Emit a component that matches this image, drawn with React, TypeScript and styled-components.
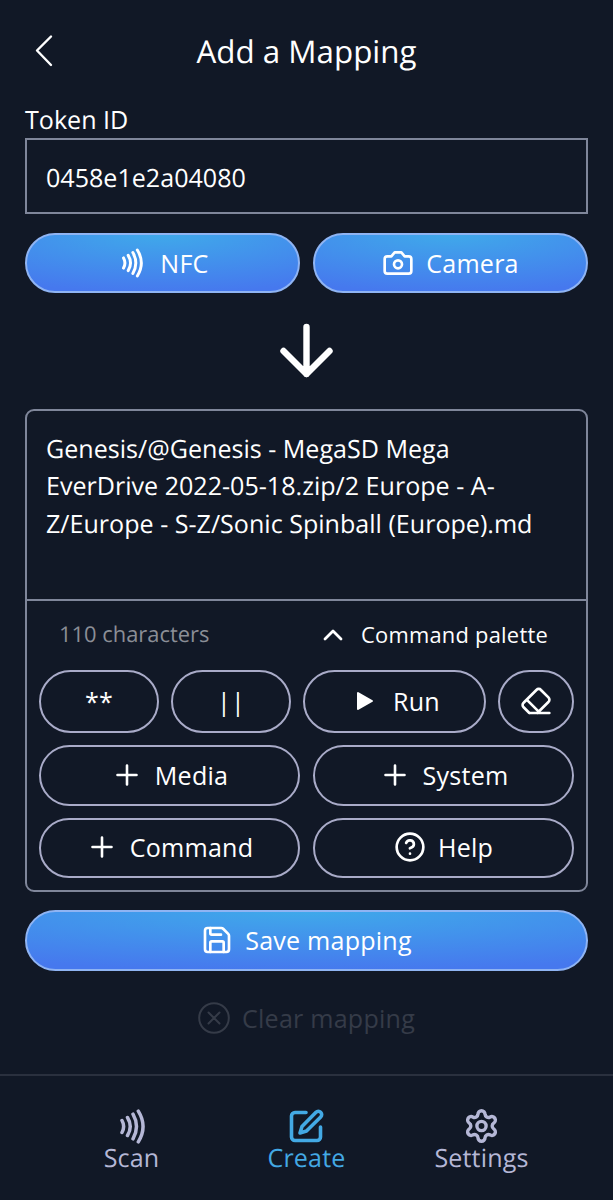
import React from 'react';
import styled, { createGlobalStyle, css } from 'styled-components';

const Global = createGlobalStyle`
  * { box-sizing: border-box; }
  body { margin: 0; background: #111826; }
  button { font: inherit; color: inherit; cursor: pointer; }
`;

const Screen = styled.div`
  display: flex;
  flex-direction: column;
  height: 1200px;
  background: #111826;
  color: #fff;
  font-family: 'Open Sans', 'Noto Sans', sans-serif;
  font-size: 25.08px;
  text-rendering: geometricPrecision;
`;

const Header = styled.header`
  display: grid;
  grid-template-columns: 60px 1fr 60px;
  align-items: center;
  height: 102px;
  padding: 0 14px;
`;

const BackButton = styled.button`
  display: flex;
  justify-content: center;
  padding: 0;
  border: 0;
  background: none;
`;

const Title = styled.h1`
  margin: 0;
  padding-top: 2px;
  font-size: 31.35px;
  font-weight: 400;
  line-height: 42px;
  text-align: center;
`;

const Main = styled.main`
  display: flex;
  flex-direction: column;
  flex: 1;
  padding: 0 25px;
`;

const Label = styled.label`
  height: 36px;
  line-height: 36px;
`;

const TokenField = styled.div`
  height: 76px;
  padding: 0 19px;
  border: 2px solid #7f869a;
  line-height: 76px;
`;

const ScanRow = styled.div`
  display: grid;
  grid-template-columns: 1fr 1fr;
  gap: 13px;
  margin-top: 19px;
`;

const pill = css`
  display: flex;
  align-items: center;
  justify-content: center;
  padding: 0 0 1px;
  border-radius: 32px;
  letter-spacing: 0.22px;
`;

const PrimaryButton = styled.button`
  ${pill}
  height: 60px;
  border: 2px solid #8fb4f3;
  background: radial-gradient(ellipse 100% 100% at 50% 0%, #3faaea 0%, #4678ee 100%) border-box;
`;

const IconSlot = styled.span`
  display: flex;
  align-items: center;
  justify-content: center;
  width: 32px;
  margin-right: 12px;
`;

const ArrowArea = styled.div`
  display: flex;
  align-items: center;
  justify-content: center;
  height: 116px;
`;

const Editor = styled.section`
  display: flex;
  flex-direction: column;
  height: 483px;
  border: 2px solid #7f869a;
  border-radius: 9px;
`;

const ScriptText = styled.div`
  height: 190px;
  padding: 19.500px 19px 0;
  border-bottom: 2px solid #7f869a;
  line-height: 37.7px;
`;

const EditorInfo = styled.div`
  display: flex;
  align-items: center;
  justify-content: space-between;
  height: 69px;
  padding: 0 38px 2px 32px;
  font-size: 21.9px;
`;

const Count = styled.span`
  color: #8b8e96;
`;

const PaletteToggle = styled.button`
  display: flex;
  align-items: center;
  padding: 0;
  border: 0;
  background: none;
  letter-spacing: 0.24px;
`;

const Palette = styled.div`
  display: flex;
  flex-direction: column;
  gap: 12px;
  padding: 0 12px;
`;

const PaletteRow = styled.div<{ $columns: string; $gap: number }>`
  display: grid;
  grid-template-columns: ${({ $columns }) => $columns};
  gap: 12px ${({ $gap }) => $gap}px;
`;

const OutlineButton = styled.button<{ $height?: number }>`
  ${pill}
  height: ${({ $height = 60.5 }) => $height}px;
  border: 2px solid #a9abc8;
  background: none;
`;

const SaveArea = styled.div`
  display: grid;
  grid-template-rows: 61px 60px;
  gap: 17px;
  margin-top: 18px;

  & > ${PrimaryButton} {
    height: 61px;
  }
`;

const ClearButton = styled.button`
  ${pill}
  border: 0;
  background: none;
  color: #353b48;
`;

const Nav = styled.nav`
  display: grid;
  grid-template-columns: repeat(3, 175px);
  justify-content: center;
  height: 126px;
  padding-top: 33px;
  border-top: 2px solid #2a303e;
`;

const NavItem = styled.a<{ $active?: boolean }>`
  display: flex;
  flex-direction: column;
  align-items: center;
  color: ${({ $active }) => ($active ? '#43a9e4' : '#b5b7d6')};
  letter-spacing: 0.15px;
  line-height: 28px;
`;

type IconProps = {
  width: number;
  height?: number;
  viewBox?: string;
  stroke?: number;
  children: React.ReactNode;
};

const Icon = ({ width, height = width, viewBox = '0 0 24 24', stroke = 2, children }: IconProps) => (
  <svg
    width={width}
    height={height}
    viewBox={viewBox}
    fill="none"
    stroke="currentColor"
    strokeWidth={stroke}
    strokeLinecap="round"
    strokeLinejoin="round"
  >
    {children}
  </svg>
);

const WavesIcon = ({ width, height }: { width: number; height: number }) => (
  <Icon width={width} height={height} viewBox="0 0 26 35" stroke={3.5}>
    <path d="M3 11.500Q6.300 17.500 3 23.500M8.500 8.500Q14 17.500 8.500 26.500M14 5.200Q21 17.500 14 29.800M19.300 2.200Q28.800 17.500 19.300 32.800" />
  </Icon>
);

const PlusIcon = () => (
  <Icon width={22} viewBox="0 0 22 22" stroke={2.6}>
    <path d="M11 1.500v19M1.500 11h19" />
  </Icon>
);

export default function App() {
  return (
    <>
      <Global />
      <Screen>
        <Header>
          <BackButton aria-label="Back">
            <Icon width={20} height={34} viewBox="0 0 20 34" stroke={2.4}>
              <path d="M17 2.500 3 16.500l14 14.500" />
            </Icon>
          </BackButton>
          <Title>Add a Mapping</Title>
        </Header>
        <Main>
          <Label>Token ID</Label>
          <TokenField>0458e1e2a04080</TokenField>
          <ScanRow>
            <PrimaryButton>
              <IconSlot>
                <WavesIcon width={22} height={30} />
              </IconSlot>
              NFC
            </PrimaryButton>
            <PrimaryButton>
              <IconSlot>
                <Icon width={32}>
                  <path d="M14.500 4h-5L7 7H4a2 2 0 0 0-2 2v9a2 2 0 0 0 2 2h16a2 2 0 0 0 2-2V9a2 2 0 0 0-2-2h-3z" />
                  <circle cx="12" cy="13" r="3" />
                </Icon>
              </IconSlot>
              Camera
            </PrimaryButton>
          </ScanRow>
          <ArrowArea>
            <Icon width={54} height={56} viewBox="0 0 54 56" stroke={6.4}>
              <path d="M26.500 4v47M3.500 28l23 23 23-23" />
            </Icon>
          </ArrowArea>
          <Editor>
            <ScriptText>
              Genesis/@Genesis - MegaSD Mega
              <br />
              EverDrive 2022-05-18.zip/2 Europe - A-
              <br />
              Z/Europe - S-Z/Sonic Spinball (Europe).md
            </ScriptText>
            <EditorInfo>
              <Count>110 characters</Count>
              <PaletteToggle>
                <IconSlot>
                  <Icon width={20} height={12} viewBox="0 0 20 12" stroke={2.8}>
                    <path d="m2 10 8-8 8 8" />
                  </Icon>
                </IconSlot>
                Command palette
              </PaletteToggle>
            </EditorInfo>
            <Palette>
              <PaletteRow $columns="120px 120px 1fr 76px" $gap={12}>
                <OutlineButton $height={63}>**</OutlineButton>
                <OutlineButton $height={63}>||</OutlineButton>
                <OutlineButton $height={63}>
                  <IconSlot>
                    <Icon width={18} height={20} viewBox="0 0 18 20">
                      <path fill="currentColor" d="M2 2v16l14-8z" />
                    </Icon>
                  </IconSlot>
                  Run
                </OutlineButton>
                <OutlineButton $height={63} aria-label="Erase">
                  <Icon width={32}>
                    <path d="m7 21-4.300-4.300c-1-1-1-2.500 0-3.400l9.600-9.600c1-1 2.500-1 3.400 0l5.600 5.600c1 1 1 2.500 0 3.400L13 21M22 21H7M5 11l9 9" />
                  </Icon>
                </OutlineButton>
              </PaletteRow>
              <PaletteRow $columns="1fr 1fr" $gap={13}>
                <OutlineButton>
                  <IconSlot>
                    <PlusIcon />
                  </IconSlot>
                  Media
                </OutlineButton>
                <OutlineButton>
                  <IconSlot>
                    <PlusIcon />
                  </IconSlot>
                  System
                </OutlineButton>
                <OutlineButton>
                  <IconSlot>
                    <PlusIcon />
                  </IconSlot>
                  Command
                </OutlineButton>
                <OutlineButton>
                  <IconSlot>
                    <Icon width={32}>
                      <circle cx="12" cy="12" r="10" />
                      <path d="M9.090 9a3 3 0 0 1 5.830 1c0 2-3 3-3 3M12 17h.01" />
                    </Icon>
                  </IconSlot>
                  Help
                </OutlineButton>
              </PaletteRow>
            </Palette>
          </Editor>
          <SaveArea>
            <PrimaryButton>
              <IconSlot>
                <Icon width={32}>
                  <path d="M15.200 3H5a2 2 0 0 0-2 2v14a2 2 0 0 0 2 2h14a2 2 0 0 0 2-2V8.800a2 2 0 0 0-.6-1.400l-3.800-3.800a2 2 0 0 0-1.400-.6z" />
                  <path d="M17 21v-7a1 1 0 0 0-1-1H8a1 1 0 0 0-1 1v7M7 3v4a1 1 0 0 0 1 1h7" />
                </Icon>
              </IconSlot>
              Save mapping
            </PrimaryButton>
            <ClearButton>
              <IconSlot>
                <Icon width={32} viewBox="0 0 32 32">
                  <circle cx="16" cy="16" r="14.800" />
                  <path d="m10.500 10.500 11 11m0-11-11 11" />
                </Icon>
              </IconSlot>
              Clear mapping
            </ClearButton>
          </SaveArea>
        </Main>
        <Nav>
          <NavItem>
            <WavesIcon width={26} height={35} />
            Scan
          </NavItem>
          <NavItem $active>
            <Icon width={35} height={35} viewBox="0 0 35 35" stroke={3.6}>
              <path d="M17 3.500H6a3.500 3.500 0 0 0-3.500 3.500v21a3.500 3.500 0 0 0 3.500 3.500h22a3.500 3.500 0 0 0 3.500-3.500V18" />
              <path d="M27 3.200a3.300 3.300 0 0 1 4.700 4.700L17.500 22l-6.500 2 2-6.500z" />
            </Icon>
            Create
          </NavItem>
          <NavItem>
            <Icon width={35} height={35} viewBox="0 0 35 35" stroke={3.400}>
              <path d="M14 5.200a3.500 3.500 0 0 1 7 0 3.500 3.500 0 0 0 5 2.900 3.500 3.500 0 0 1 3.700 6 3.500 3.500 0 0 0 0 5.800 3.500 3.500 0 0 1-3.700 6 3.500 3.500 0 0 0-5 2.900 3.500 3.500 0 0 1-7 0 3.500 3.500 0 0 0-5-2.900 3.500 3.500 0 0 1-3.700-6 3.500 3.500 0 0 0 0-5.800 3.500 3.500 0 0 1 3.700-6 3.500 3.500 0 0 0 5-2.900z" />
              <circle cx="17.500" cy="17" r="4.600" />
            </Icon>
            Settings
          </NavItem>
        </Nav>
      </Screen>
    </>
  );
}
